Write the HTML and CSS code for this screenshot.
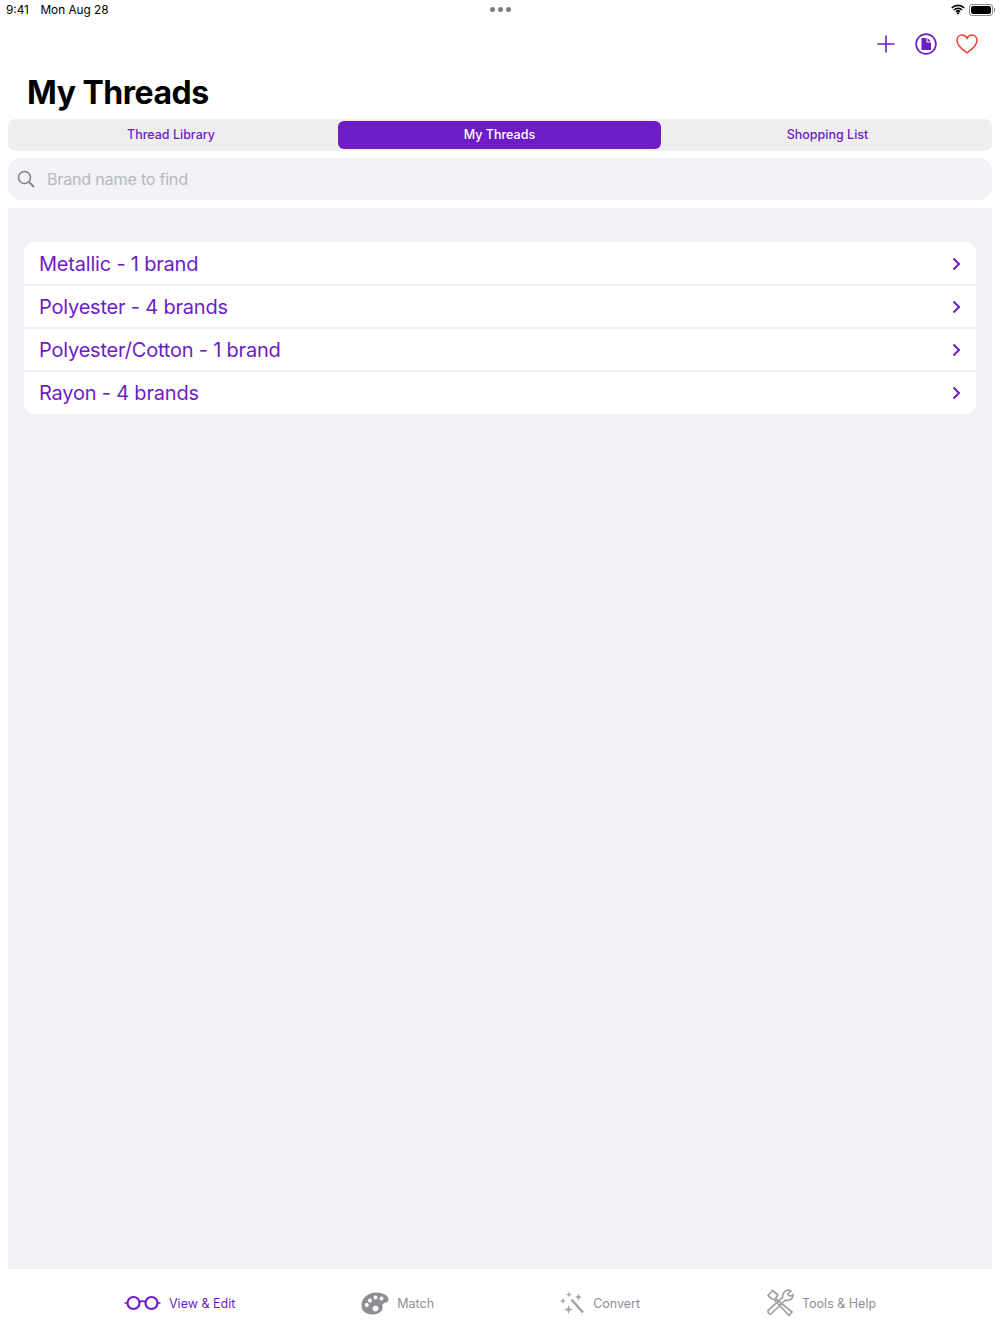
FILE: index.html
```html
<!DOCTYPE html>
<html lang="en">
  <head>
    <meta charset="UTF-8" />
    <title>My Threads</title>
    <link rel="stylesheet" href="styles.css">
  </head>
  <body>
    <div class="status_bar">
      <div class="status_left"><span>9:41</span><span>Mon Aug 28</span></div>
      <div class="dots"><i></i><i></i><i></i></div>
      <div class="status_right">
        <svg width="14" height="11" viewBox="0 0 16 12">
          <path d="M1 4.2a10 10 0 0 1 14 0M3.4 6.6a6.6 6.6 0 0 1 9.2 0M5.7 8.8a3.3 3.3 0 0 1 4.6 0" fill="none" stroke="#000" stroke-width="1.9"/>
          <path d="M8 12l-1.7-1.9a2.4 2.4 0 0 1 3.4 0z" fill="#000"/>
        </svg>
        <div class="battery"><div class="battery_fill"></div></div>
        <div class="battery_cap"></div>
      </div>
    </div>

    <div class="nav_buttons">
      <svg width="18" height="18" viewBox="0 0 18 18">
        <path d="M9 0.5v17M0.5 9h17" stroke="#6e1cc4" stroke-width="1.6" fill="none"/>
      </svg>
      <svg width="22" height="22" viewBox="0 0 22 22">
        <circle cx="11" cy="11" r="9.9" stroke="#6e1cc4" stroke-width="1.7" fill="none"/>
        <path d="M6.500 5h5v4.500h4.500V17H6.500zM12.500 5L16 8.500H12.500z" fill="#6e1cc4"/>
      </svg>
      <svg width="22" height="20" viewBox="0 0 22 20">
        <path d="M11 18.800C5 14.600 1 11 1 6.400 1 3.300 3.300 1 6.100 1 8.200 1 10 2.200 11 4.200 12 2.200 13.800 1 15.900 1 18.700 1 21 3.300 21 6.400 21 11 17 14.600 11 18.800z" stroke="#f4403a" stroke-width="1.600" fill="none"/>
      </svg>
    </div>

    <h1 class="title">My Threads</h1>

    <div class="segments">
      <div class="segment">Thread Library</div>
      <div class="segment active">My Threads</div>
      <div class="segment">Shopping List</div>
    </div>

    <div class="search">
      <svg width="18" height="18" viewBox="0 0 18 18">
        <circle cx="7.500" cy="7.500" r="6" stroke="#838388" stroke-width="1.600" fill="none"/>
        <path d="M12 12l5 5" stroke="#838388" stroke-width="1.900" fill="none"/>
      </svg>
      <span>Brand name to find</span>
    </div>

    <div class="content">
      <ul class="brand_list">
        <li><span>Metallic - 1 brand</span><svg class="chevron" width="9" height="14" viewBox="0 0 9 14"><path d="M1.500 1.500L7 7l-5.500 5.500" /></svg></li>
        <li><span>Polyester - 4 brands</span><svg class="chevron" width="9" height="14" viewBox="0 0 9 14"><path d="M1.500 1.500L7 7l-5.500 5.500" /></svg></li>
        <li><span>Polyester/Cotton - 1 brand</span><svg class="chevron" width="9" height="14" viewBox="0 0 9 14"><path d="M1.500 1.500L7 7l-5.500 5.500" /></svg></li>
        <li><span>Rayon - 4 brands</span><svg class="chevron" width="9" height="14" viewBox="0 0 9 14"><path d="M1.500 1.500L7 7l-5.500 5.500" /></svg></li>
      </ul>
    </div>

    <div class="tab_bar">
      <div class="tab tab_view selected">
        <svg width="37" height="16" viewBox="0 0 37 16">
          <circle cx="9.500" cy="8" r="6" stroke="#6e1cc4" stroke-width="2.200" fill="none"/>
          <circle cx="27.500" cy="8" r="6" stroke="#6e1cc4" stroke-width="2.200" fill="none"/>
          <path d="M15 7q3.500-1.800 7 0M0.500 8h3M33.500 8h3" stroke="#6e1cc4" stroke-width="1.600" fill="none"/>
        </svg>
        <span>View &amp; Edit</span>
      </div>
      <div class="tab tab_match">
        <svg width="28" height="23" viewBox="0 0 28 23">
          <path fill-rule="evenodd" fill="#8e8e93" d="M15 0.500C22 0.500 27.500 3.500 27.500 7.500 27.500 11 23.500 10.500 22 12 20.500 13.500 22.500 15.500 21 18 19 21.500 15 22.500 11 22.500 5 22.500 0.500 19 0.500 13.500 0.500 6 7 0.500 15 0.500zM9 6.500a2 2 0 1 0 0.010 0zM14.500 3.500a2 2 0 1 0 0.010 0zM20.500 4.500a2 2 0 1 0 0.010 0zM5.800 11a2 2 0 1 0 0.010 0zM14.500 13.500a3 3 0 1 0 0.010 0z"/>
        </svg>
        <span>Match</span>
      </div>
      <div class="tab tab_convert">
        <svg width="25" height="25" viewBox="0 0 25 25">
          <path fill="#a0a0a5" d="M9 0.500l0.800 2.200 2.200 0.800-2.200 0.800L9 6.500 8.200 4.300 6 3.500l2.200-0.800zM18.500 2.500l0.900 2.600 2.600 0.900-2.600 0.900-0.900 2.600-0.900-2.600L15 6l2.600-0.900zM3 7l0.800 2.200L6 10l-2.200 0.800L3 13l-0.800-2.200L0 10l2.200-0.800zM8.500 14l1.100 3.400 3.400 1.100-3.400 1.100-1.100 3.400-1.100-3.400L4 18.500l3.400-1.100z"/>
          <path d="M11.500 8.500L23 21.500" stroke="#a0a0a5" stroke-width="2.400" fill="none"/>
        </svg>
        <span>Convert</span>
      </div>
      <div class="tab tab_tools">
        <svg width="27" height="28" viewBox="0 0 27 28">
          <g fill="none" stroke="#a0a0a5" stroke-width="1.700" stroke-linejoin="round">
            <path d="M1 6.500L5.500 1.500 11 6 9.500 8 8.500 9.500 25 23 22 26.500 7 10.500 5 10z"/>
            <path d="M24 1.800L20.800 5l1.500 2 2.700-0.500 1-1.200a5.500 5.500 0 0 1-7.500 5.700L5.500 23.500a2.400 2.400 0 1 1-3-3.300L15.800 8.200A5.800 5.800 0 0 1 24 1.800z"/>
          </g>
        </svg>
        <span>Tools &amp; Help</span>
      </div>
    </div>
  </body>
</html>
```

FILE: styles.css
```css
html,
body {
  height: 100%;
}

body {
  margin: 0;
  padding: 0 8px;
  box-sizing: border-box;
  display: flex;
  flex-direction: column;
  background-color: #fff;
  color: #000;
  font-family: Inter, "Liberation Sans", sans-serif;
}

.status_bar {
  height: 20px;
  box-sizing: border-box;
  margin: 0 -8px;
  padding: 0 5px 1px 6px;
  display: flex;
  justify-content: space-between;
  align-items: center;
  position: relative;
  font-size: 11.8px;
}

.status_left span {
  margin-right: 11.5px;
}

.dots {
  display: flex;
  gap: 3px;
  position: absolute;
  left: 490px;
  top: 7px;
}

.dots i {
  width: 5px;
  height: 5px;
  border-radius: 50%;
  background-color: #7c7c80;
}

.status_right {
  display: flex;
  align-items: center;
}

.battery {
  width: 20px;
  height: 8px;
  margin-left: 4px;
  padding: 1px;
  border: 1px solid #8a8a8a;
  border-radius: 3px;
}

.battery_fill {
  width: 100%;
  height: 100%;
  background-color: #000;
  border-radius: 2px;
}

.battery_cap {
  width: 1px;
  height: 4px;
  margin-left: 1px;
  background-color: #8a8a8a;
}

.nav_buttons {
  height: 48px;
  display: flex;
  justify-content: flex-end;
  align-items: center;
  padding-right: 14px;
  gap: 19.5px;
}

.title {
  margin: 0;
  height: 51px;
  padding-left: 19px;
  font-size: 32px;
  font-weight: 700;
  line-height: 50px;
  letter-spacing: -0.5px;
}

.segments {
  height: 32px;
  box-sizing: border-box;
  padding: 2px 2px 2px 0;
  display: grid;
  grid-template-columns: 326px 331px 1fr;
  background-color: #eeeeef;
  border-radius: 8px;
}

.segment {
  display: flex;
  justify-content: center;
  align-items: center;
  padding-bottom: 1px;
  font-size: 12.5px;
  font-weight: 500;
  color: #6e1cc4;
  border-radius: 6px;
}

.segment.active {
  margin: 0 4px;
  background-color: #6e1cc4;
  color: #fff;
}

.search {
  height: 42px;
  margin-top: 7px;
  padding-left: 9px;
  display: flex;
  align-items: center;
  gap: 12px;
  background-color: #f2f2f7;
  border-radius: 14px;
  font-size: 16.3px;
  letter-spacing: -0.3px;
  color: #b9b9bd;
}

.content {
  flex: 1;
  margin-top: 8px;
  padding: 34px 16px 0;
  background-color: #f2f2f7;
}

.brand_list {
  margin: 0;
  padding: 0;
  list-style-type: none;
  background-color: #fff;
  border-radius: 10px;
}

.brand_list li {
  height: 43px;
  box-sizing: border-box;
  padding: 0 15px;
  display: flex;
  justify-content: space-between;
  align-items: center;
  font-size: 20px;
  color: #6e1cc4;
  letter-spacing: -0.2px;
  box-shadow: 0 1px 0 #eeeeef, inset 0 -1px 0 #eeeeef;
}

.brand_list li:last-child {
  box-shadow: none;
}

.chevron path {
  fill: none;
  stroke: #6e1cc4;
  stroke-width: 2;
}

.tab_bar {
  height: 65px;
  box-sizing: border-box;
  padding-top: 3px;
  display: flex;
  align-items: center;
  font-size: 12.5px;
  color: #8e8e93;
}

.tab {
  display: flex;
  align-items: center;
  gap: 8px;
}

.tab.selected {
  color: #6e1cc4;
}

.tab_view {
  margin-left: 116px;
}

.tab_match {
  margin-left: 126px;
}

.tab_convert {
  margin-left: 126px;
}

.tab_tools {
  margin-left: 127px;
}
```
